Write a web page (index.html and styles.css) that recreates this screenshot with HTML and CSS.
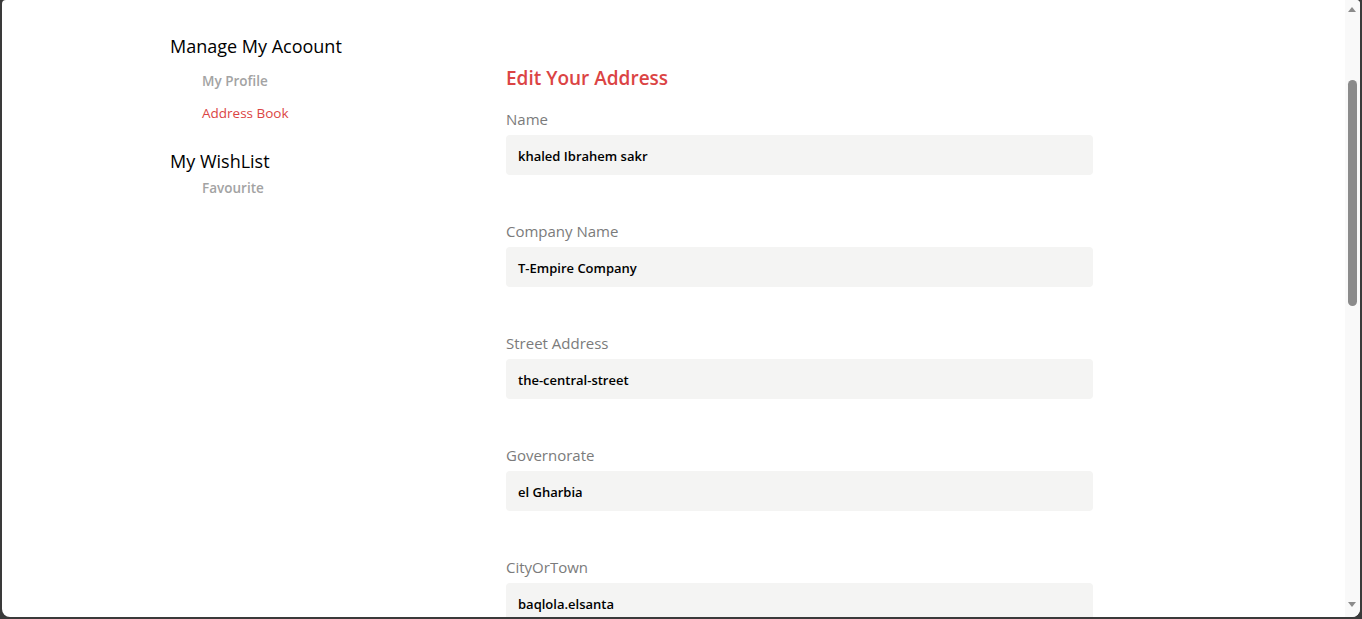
FILE: index.html
```html
<!DOCTYPE html>
<html lang="en">
<head>
<meta charset="utf-8">
<title>Edit Your Address</title>
<link rel="stylesheet" href="styles.css">
</head>
<body>
<div class="window">
  <div class="page">
    <aside class="sidebar">
      <h3 class="side-title">Manage My Acoount</h3>
      <ul class="side-list">
        <li class="side-link">My Profile</li>
        <li class="side-link active">Address Book</li>
      </ul>
      <h3 class="side-title wish">My WishList</h3>
      <ul class="side-list tight">
        <li class="side-link">Favourite</li>
      </ul>
    </aside>
    <main class="main">
      <h2 class="main-title">Edit Your Address</h2>
      <div class="field">
        <label class="label">Name</label>
        <div class="input">khaled Ibrahem sakr</div>
      </div>
      <div class="field">
        <label class="label">Company Name</label>
        <div class="input">T-Empire Company</div>
      </div>
      <div class="field">
        <label class="label">Street Address</label>
        <div class="input">the-central-street</div>
      </div>
      <div class="field">
        <label class="label">Governorate</label>
        <div class="input">el Gharbia</div>
      </div>
      <div class="field">
        <label class="label">CityOrTown</label>
        <div class="input">baqlola.elsanta</div>
      </div>
    </main>
  </div>
  <div class="scrollbar">
    <span class="arrow up"></span>
    <span class="thumb"></span>
    <span class="arrow down"></span>
  </div>
</div>
</body>
</html>
```

FILE: styles.css
```css
html, body {
  margin: 0;
  padding: 0;
  height: 100%;
  overflow: hidden;
}
body {
  background: #3a3a3a;
  font-family: "Open Sans", "Noto Sans", sans-serif;
}
.window {
  position: relative;
  box-sizing: border-box;
  height: 617px;
  margin: 0 2px 2px 2px;
  background: #ffffff;
  border-radius: 4px 4px 8px 8px;
  overflow: hidden;
}
.page {
  display: flex;
  padding-left: 168px;
}
.sidebar {
  width: 336px;
  padding-top: 32px;
}
.side-title {
  margin: 0;
  font-size: 18px;
  font-weight: 500;
  line-height: 28px;
  color: #000;
}
.side-title.wish {
  margin-top: 24px;
}
.side-list {
  list-style: none;
  margin: 11px 0 0 0;
  padding: 0 0 0 32px;
  display: flex;
  flex-direction: column;
  gap: 12px;
}
.side-list.tight {
  margin-top: 3px;
}
.side-link {
  font-size: 13.5px;
  line-height: 20px;
  font-weight: 600;
  color: #a3a3a3;
}
.side-link.active {
  color: #db4444;
  font-weight: 500;
}
.main {
  width: 587px;
  padding-top: 64px;
}
.main-title {
  margin: 0 0 16px 0;
  font-size: 19px;
  font-weight: 600;
  line-height: 28px;
  color: #db4444;
}
.field {
  display: flex;
  flex-direction: column;
  gap: 5px;
  margin-bottom: 45px;
}
.label {
  font-size: 15px;
  line-height: 22px;
  color: #7b7b7b;
}
.input {
  box-sizing: border-box;
  height: 40px;
  padding: 1px 12px 0 12px;
  display: flex;
  align-items: center;
  background: #f4f4f3;
  border-radius: 4px;
  font-size: 13px;
  font-weight: 600;
  color: #000;
}
.scrollbar {
  position: absolute;
  top: 0;
  right: 0;
  width: 15px;
  height: 100%;
  background: #f9f9f9;
}
.thumb {
  position: absolute;
  left: 3px;
  top: 80px;
  width: 9px;
  height: 226px;
  border-radius: 5px;
  background: #8b8b8b;
}
.arrow {
  position: absolute;
  left: 3px;
  width: 0;
  height: 0;
  border-left: 4.5px solid transparent;
  border-right: 4.5px solid transparent;
}
.arrow.up {
  top: 7px;
  border-bottom: 5px solid #8b8b8b;
}
.arrow.down {
  bottom: 10px;
  border-top: 5px solid #8b8b8b;
}
```
